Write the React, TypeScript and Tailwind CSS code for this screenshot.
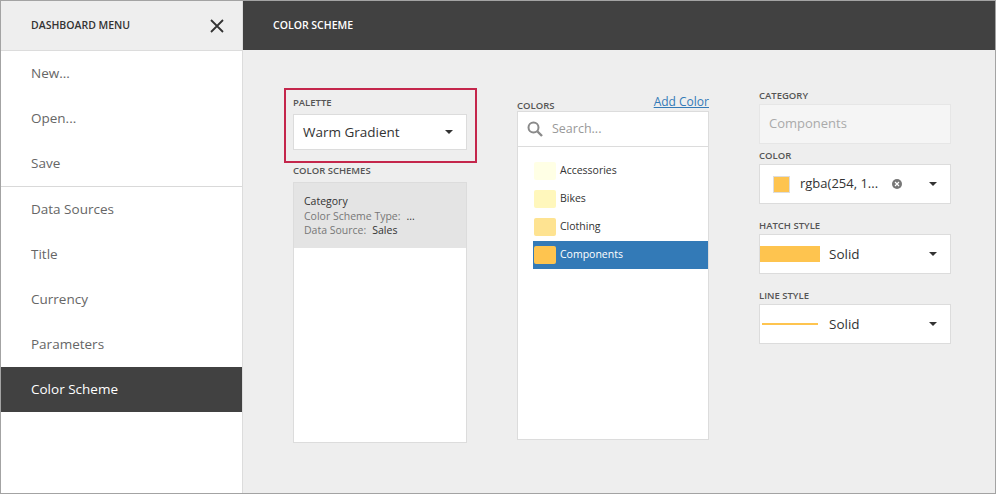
import React from "react";

const font = { };

function Caret() {
  return <span className="ml-auto mr-[13px] h-0 w-0 border-x-[4px] border-t-[4px] border-x-transparent border-t-[#333]" />;
}

function Label({ children, className = "" }: { children: React.ReactNode; className?: string }) {
  return <div className={`text-[9.5px] leading-[12px] font-semibold text-[#555] tracking-[0px] ${className}`}>{children}</div>;
}

const menuA = ["New...", "Open...", "Save"];
const menuB = ["Data Sources", "Title", "Currency", "Parameters"];
const colors = [
  ["Accessories", "#ffffe5"],
  ["Bikes", "#fff7bc"],
  ["Clothing", "#fee391"],
  ["Components", "#fec44f"],
];

function MenuItem({ t, active = false }: { t: string; active?: boolean }) {
  return (
    <div className={`h-[45px] pl-[30px] flex items-center text-[13.5px] ${active ? "bg-[#414141] text-white" : "text-[#666]"}`}>{t}</div>
  );
}

export default function App() {
  return (
    <div className="w-[996px] h-[494px] border border-[#a3a3a3] flex bg-white overflow-hidden font-['Open_Sans',sans-serif] text-[#333]">
      <div className="w-[241px] shrink-0 flex flex-col">
        <div className="h-[50px] bg-[#eeeeee] border-b border-[#dcdcdc] pl-[30px] pr-[17px] flex items-center justify-between shrink-0">
          <span className="text-[10.5px] font-semibold text-[#333]">DASHBOARD MENU</span>
          <svg width="16" height="16" viewBox="0 0 16 16" className="mt-[1px]"><path d="M2 2 14 14M14 2 2 14" stroke="#333" strokeWidth="1.8" fill="none" /></svg>
        </div>
        <div className="border-b border-[#d9d9d9] pt-0">
          {menuA.map((t) => <MenuItem key={t} t={t} />)}
        </div>
        {menuB.map((t) => <MenuItem key={t} t={t} />)}
        <MenuItem t="Color Scheme" active />
      </div>
      <div className="flex-1 flex flex-col border-l border-[#dcdcdc] bg-[#eeeeee]">
        <div className="h-[49px] bg-[#414141] pl-[30px] flex items-center text-white text-[10.5px] font-semibold shrink-0">COLOR SCHEME</div>
        <div className="flex gap-[50px] pl-[50px] pt-[38px] items-start">
          <div className="w-[174px] flex flex-col">
            <div className="-ml-[9px] w-[193px] h-[75px] border-2 border-[#c4264b] pl-[7px] pt-[7px]">
              <Label>PALETTE</Label>
              <div className="mt-[5px] w-[174px] h-[36px] bg-white border border-[#dcdcdc] pl-[9px] flex items-center text-[13.5px]">
                Warm Gradient<Caret />
              </div>
            </div>
            <Label className="mt-[2px]">COLOR SCHEMES</Label>
            <div className="mt-[5px] h-[261px] bg-white border border-[#dcdcdc]">
              <div className="h-[65px] bg-[#e4e4e4] pl-[10px] pt-[11px] text-[10.5px] leading-[14px]">
                <div className="text-[#333] leading-[15px]">Category</div>
                <div className="text-[#777] flex"><span>Color Scheme Type:</span><span className="ml-[6px] text-[#333]">...</span></div>
                <div className="text-[#777] flex"><span>Data Source:</span><span className="ml-[6px] text-[#333]">Sales</span></div>
              </div>
            </div>
          </div>
          <div className="w-[192px] flex flex-col">
            <div className="flex justify-between items-end h-[24px] pt-0">
              <Label className="mb-[0px]">COLORS</Label>
              <a className="text-[12px] leading-[16px] text-[#337ab7] underline mb-[2px]">Add Color</a>
            </div>
            <div className="mt-[-1px] h-[329px] bg-white border border-[#dcdcdc] flex flex-col">
              <div className="h-[35px] border-b border-[#dcdcdc] flex items-center pl-[8px] shrink-0">
                <svg width="18" height="18" viewBox="0 0 18 18"><circle cx="7.5" cy="7.5" r="5" stroke="#8a8a8a" strokeWidth="2" fill="none" /><path d="M11.5 11.5 16 16" stroke="#8a8a8a" strokeWidth="2.4" /></svg>
                <span className="ml-[8px] text-[12.5px] text-[#999]">Search...</span>
              </div>
              <div className="pt-[10px] pl-[15px] flex flex-col">
                {colors.map(([n, c], i) => (
                  <div key={n} className={`h-[28px] flex items-center pl-[1px] text-[10.5px] ${i === 3 ? "bg-[#337ab7] text-white" : "text-[#333]"}`}>
                    <span className="w-[22px] h-[18px] rounded-[2px]" style={{ backgroundColor: c }} />
                    <span className="ml-[4px]">{n}</span>
                  </div>
                ))}
              </div>
            </div>
          </div>
          <div className="w-[192px] flex flex-col">
            <Label className="mt-[2px]">CATEGORY</Label>
            <div className="mt-[2px] h-[40px] bg-[#f5f5f5] border border-[#e6e6e6] pl-[9px] flex items-center text-[13px] text-[#aaa]">Components</div>
            <Label className="mt-[6px]">COLOR</Label>
            <div className="mt-[2px] h-[40px] bg-white border border-[#dcdcdc] flex items-center text-[13px]">
              <span className="ml-[13px] w-[17px] h-[17px] bg-[#fec44f] border border-[#ddd]" />
              <span className="ml-[10px]">rgba(254, 1...</span>
              <span className="ml-[14px] w-[10px] h-[10px] rounded-full bg-[#777] flex items-center justify-center">
                <svg width="6" height="6" viewBox="0 0 6 6"><path d="M1 1 5 5M5 1 1 5" stroke="#fff" strokeWidth="1.2" /></svg>
              </span>
              <Caret />
            </div>
            <Label className="mt-[16px]">HATCH STYLE</Label>
            <div className="mt-[2px] h-[40px] bg-white border border-[#dcdcdc] flex items-center text-[13.5px]">
              <span className="w-[60px] h-[16px] bg-[#fec44f]" />
              <span className="ml-[9px]">Solid</span>
              <Caret />
            </div>
            <Label className="mt-[16px]">LINE STYLE</Label>
            <div className="mt-[2px] h-[40px] bg-white border border-[#dcdcdc] flex items-center text-[13.5px]">
              <span className="ml-[2px] w-[56px] h-[2px] bg-[#fec44f]" />
              <span className="ml-[11px]">Solid</span>
              <Caret />
            </div>
          </div>
        </div>
      </div>
    </div>
  );
}
